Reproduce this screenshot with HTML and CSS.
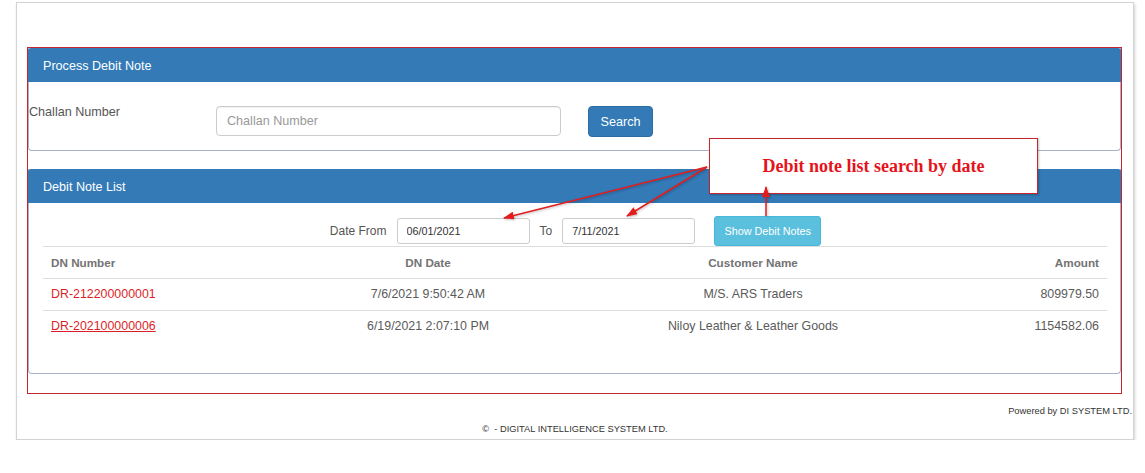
FILE: index.html
```html
<!DOCTYPE html>
<html>
<head>
  <title>Process Debit Note</title>
  <link rel="stylesheet" href="styles.css">
</head>
<body>
  <div class="page-frame">
    <div class="mark-box">
      <div class="panel">
        <div class="panel-heading">Process Debit Note</div>
        <div class="challan-row">
          <label class="challan-label">Challan Number</label>
          <input type="text" class="challan-input" placeholder="Challan Number">
          <button class="btn-search">Search</button>
        </div>
      </div>

      <div class="panel list-panel">
        <div class="panel-heading">Debit Note List</div>
        <div class="list-body">
          <div class="date-filter">
            <span class="filter-label">Date From</span>
            <input type="text" class="date-input" value="06/01/2021">
            <span class="filter-label to-label">To</span>
            <input type="text" class="date-input" value="7/11/2021">
            <button class="btn-show">Show Debit Notes</button>
          </div>

          <table class="dn-table">
            <thead>
              <tr>
                <th class="col-number">DN Number</th>
                <th class="col-date">DN Date</th>
                <th class="col-customer">Customer Name</th>
                <th class="col-amount">Amount</th>
              </tr>
            </thead>
            <tbody>
              <tr>
                <td class="col-number"><a href="#" class="dn-link">DR-212200000001</a></td>
                <td class="col-date">7/6/2021 9:50:42 AM</td>
                <td class="col-customer">M/S. ARS Traders</td>
                <td class="col-amount">809979.50</td>
              </tr>
              <tr>
                <td class="col-number"><a href="#" class="dn-link underlined">DR-202100000006</a></td>
                <td class="col-date">6/19/2021 2:07:10 PM</td>
                <td class="col-customer">Niloy Leather &amp; Leather Goods</td>
                <td class="col-amount">1154582.06</td>
              </tr>
            </tbody>
          </table>
        </div>
      </div>
    </div>

    <div class="powered">Powered by DI SYSTEM LTD.</div>
    <div class="copyright">&copy;&nbsp; - DIGITAL INTELLIGENCE SYSTEM LTD.</div>
  </div>

  <!-- annotation drawn over the screenshot -->
  <div class="callout">Debit note list search by date</div>
  <svg class="arrows" width="1145" height="473" viewBox="0 0 1145 473">
    <defs>
      <marker id="head" markerWidth="11" markerHeight="8" refX="10" refY="4" orient="auto" markerUnits="userSpaceOnUse">
        <path d="M0,0 L11,4 L0,8 z" fill="#e41c1c"/>
      </marker>
    </defs>
    <line x1="707" y1="167" x2="504" y2="218" stroke="#e41c1c" stroke-width="1.5" marker-end="url(#head)"/>
    <line x1="707" y1="167" x2="627" y2="216" stroke="#e41c1c" stroke-width="1.5" marker-end="url(#head)"/>
    <line x1="766" y1="216" x2="766" y2="187" stroke="#e41c1c" stroke-width="1.5" marker-end="url(#head)"/>
  </svg>
</body>
</html>
```

FILE: styles.css
```css
body {
  margin: 0;
  position: relative;
  background: #fff;
  font-family: "Liberation Sans", Arial, sans-serif;
  color: #555;
}

.page-frame {
  margin: 2px 0 0 16px;
  width: 1118px;
  box-sizing: border-box;
  border: 1px solid #d3d3d3;
  box-shadow: 1px 2px 3px rgba(0, 0, 0, 0.18);
  padding: 44px 0 4px;
  background: #fff;
}

.mark-box {
  margin-left: 10px;
  width: 1095px;
  box-sizing: border-box;
  border: 1px solid #c3262e;
  padding-bottom: 19px;
}

.panel {
  border: 1px solid #aab3c5;
  border-top: none;
  border-radius: 0 0 4px 4px;
  background: #fff;
}

.list-panel {
  margin-top: 18px;
}

.panel-heading {
  height: 32px;
  line-height: 32px;
  padding: 2px 0 0 15px;
  margin: 0 -1px;
  background-color: #337ab7;
  color: #fff;
  font-size: 12.6px;
  border-radius: 3px 3px 0 0;
}

/* process debit note */

.challan-row {
  display: flex;
  align-items: flex-start;
  padding: 24px 0 13px 0;
}

.challan-label {
  width: 187px;
  margin-top: -3px;
  line-height: 18px;
  font-size: 12.6px;
  color: #555;
}

.challan-input {
  width: 345px;
  height: 30px;
  box-sizing: border-box;
  border: 1px solid #ccc;
  border-radius: 4px;
  padding: 0 10px;
  font-family: inherit;
  font-size: 12.6px;
  color: #555;
  box-shadow: inset 0 1px 1px rgba(0, 0, 0, 0.06);
}

.challan-input::placeholder {
  color: #999;
}

.btn-search {
  margin-left: 27px;
  width: 65px;
  height: 31px;
  border: 1px solid #2e6da4;
  border-radius: 4px;
  background-color: #337ab7;
  color: #fff;
  font-family: inherit;
  font-size: 12.6px;
  padding: 0;
}

/* debit note list */

.list-body {
  padding: 13px 12px 31px 14px;
}

.date-filter {
  display: flex;
  justify-content: center;
  align-items: center;
  height: 30px;
}

.filter-label {
  font-size: 12px;
  color: #555;
  margin-right: 10px;
}

.to-label {
  margin-left: 10px;
}

.date-input {
  width: 133px;
  height: 26px;
  box-sizing: border-box;
  border: 1px solid #ccc;
  border-radius: 3px;
  padding: 0 9px;
  font-family: inherit;
  font-size: 10.8px;
  color: #333;
}

.btn-show {
  margin-left: 19px;
  width: 107px;
  height: 30px;
  border: 1px solid #46b8da;
  border-radius: 3px;
  background-color: #5bc0de;
  color: #fff;
  font-family: inherit;
  font-size: 10.8px;
  padding: 0;
}

.dn-table {
  width: 1064px;
  border-collapse: separate;
  border-spacing: 0;
  table-layout: fixed;
}

.dn-table th,
.dn-table td {
  padding: 0 8px;
  line-height: 31px;
  border-top: 1px solid #ddd;
  white-space: nowrap;
}

.dn-table th {
  font-size: 11.7px;
  font-weight: bold;
  color: #737373;
}

.dn-table td {
  font-size: 12.4px;
  color: #5a5a5a;
}

.col-number {
  width: 254px;
  text-align: left;
}

.col-date {
  width: 214px;
  text-align: center;
}

.col-customer {
  width: 404px;
  text-align: center;
}

.col-amount {
  text-align: right;
}

.dn-link {
  color: #dc1f27;
  text-decoration: none;
}

.dn-link.underlined {
  text-decoration: underline;
}

/* footer */

.powered {
  margin-top: 11px;
  padding-right: 1px;
  text-align: right;
  font-size: 9.3px;
  line-height: 12px;
  color: #333;
}

.copyright {
  margin-top: 6px;
  text-align: center;
  font-size: 9.3px;
  line-height: 12px;
  color: #333;
}

/* annotation */

.callout {
  position: absolute;
  left: 709px;
  top: 138px;
  width: 329px;
  height: 56px;
  box-sizing: border-box;
  border: 1px solid #c3262e;
  background: #fff;
  box-shadow: 1px 1px 2px rgba(0, 0, 0, 0.25);
  display: flex;
  justify-content: center;
  align-items: center;
  font-family: "Liberation Serif", "Times New Roman", serif;
  font-weight: bold;
  font-size: 18px;
  color: #e5131c;
}

.arrows {
  position: absolute;
  left: 0;
  top: 0;
  pointer-events: none;
  filter: drop-shadow(1px 1px 1px rgba(0, 0, 0, 0.25));
}
```
